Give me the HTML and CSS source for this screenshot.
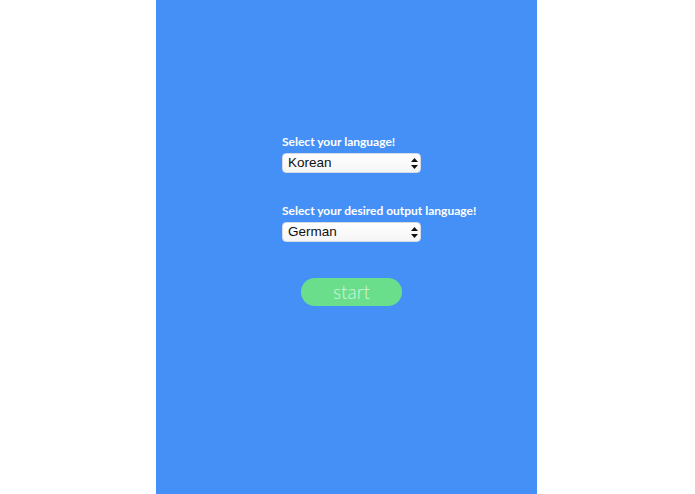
FILE: index.html
```html
<!DOCTYPE html>
<html>
<head>
<meta charset="utf-8">
<link rel="stylesheet" href="styles.css">
</head>
<body>
<div class="page">
  <main class="panel">
    <form class="form">
      <label class="label">Select your language!</label>
      <div class="select-wrap">
        <select class="select"><option>Korean</option></select>
        <svg class="arrows" width="7" height="11" viewBox="0 0 7 11"><path d="M3.5 0 L7 4 L0 4 Z M3.5 11 L7 7 L0 7 Z" fill="#111"/></svg>
      </div>
      <label class="label label-second">Select your desired output language!</label>
      <div class="select-wrap">
        <select class="select"><option>German</option></select>
        <svg class="arrows" width="7" height="11" viewBox="0 0 7 11"><path d="M3.5 0 L7 4 L0 4 Z M3.5 11 L7 7 L0 7 Z" fill="#111"/></svg>
      </div>
      <button type="button" class="start">start</button>
    </form>
  </main>
</div>
</body>
</html>
```
FILE: styles.css
```css
html, body {
  margin: 0;
  padding: 0;
  background: #ffffff;
}
.page {
  display: flex;
  justify-content: flex-start;
  height: 494px;
  padding-left: 156px;
}
.panel {
  width: 381px;
  height: 494px;
  background: #4590f6;
  box-sizing: border-box;
  padding-top: 134px;
  padding-left: 126px;
}
.form {
  display: flex;
  flex-direction: column;
  align-items: flex-start;
}
.label {
  font-family: "Lato", "Noto Sans", sans-serif;
  font-weight: 700;
  font-size: 12px;
  line-height: 15px;
  color: #ffffff;
  margin-bottom: 4px;
}
.label-second {
  margin-top: 30px;
}
.select-wrap {
  position: relative;
  width: 139px;
  height: 20px;
}
.select {
  appearance: none;
  -webkit-appearance: none;
  width: 139px;
  height: 20px;
  margin: 0;
  box-sizing: border-box;
  border: 1px solid #d5dbe4;
  border-radius: 4px;
  background: linear-gradient(#ffffff, #f5f5f5);
  font-family: "Liberation Sans", Arial, sans-serif;
  font-size: 13.5px;
  color: #111;
  padding: 0 0 0 5px;
  line-height: 18px;
}
.arrows {
  position: absolute;
  right: 3px;
  top: 5px;
  pointer-events: none;
}
.start {
  margin-top: 36px;
  margin-left: 19px;
  width: 101px;
  height: 28px;
  border: none;
  border-radius: 14px;
  background: #6ade8b;
  color: #d0f6da;
  font-family: "Lato", "Noto Sans", sans-serif;
  font-weight: 300;
  font-size: 19px;
  line-height: 28px;
  padding: 0;
}
```
